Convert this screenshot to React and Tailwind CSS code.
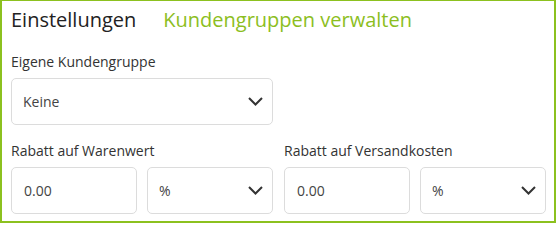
import React from 'react';

const font = { fontFamily: '"Open Sans", "Noto Sans", sans-serif' };

function Chevron() {
  return (
    <svg width="15" height="9" viewBox="0 0 15 9" fill="none" className="shrink-0">
      <path d="M1 1l6.5 6.5L14 1" stroke="#333" strokeWidth="2" />
    </svg>
  );
}

function SelectBox({ value, className = '' }) {
  return (
    <div
      className={`flex h-[47px] items-center justify-between rounded-[5px] border border-[#dcdcdc] bg-white pl-[11px] pr-[9px] text-[14px] text-[#444] ${className}`}
    >
      <span>{value}</span>
      <Chevron />
    </div>
  );
}

function TextBox({ value }) {
  return (
    <div className="flex h-[47px] w-[126px] items-center rounded-[5px] border border-[#dcdcdc] bg-white pl-[12px] text-[14px] text-[#444]">
      {value}
    </div>
  );
}

function DiscountField({ label }) {
  return (
    <div className="w-[262px]">
      <label className="mb-[6px] block text-[14px] leading-[20px] text-[#333]">{label}</label>
      <div className="flex gap-[10px]">
        <TextBox value="0.00" />
        <SelectBox value="%" className="w-[126px]" />
      </div>
    </div>
  );
}

export default function App() {
  return (
    <div
      style={font}
      className="h-[223px] w-[556px] border-2 border-t border-[#8cc11f] bg-white px-[9px] pt-[6px] pb-[7px]"
    >
      <div className="flex items-baseline gap-[27px] text-[20px] leading-[26px]">
        <h2 className="text-[#222]">Einstellungen</h2>
        <a className="text-[#8cbe1e]">Kundengruppen verwalten</a>
      </div>

      <div className="mt-[19px]">
        <label className="mb-[6px] block text-[14px] leading-[20px] text-[#333]">Eigene Kundengruppe</label>
        <SelectBox value="Keine" className="w-[262px]" />
      </div>

      <div className="mt-[16px] flex gap-[11px]">
        <DiscountField label="Rabatt auf Warenwert" />
        <DiscountField label="Rabatt auf Versandkosten" />
      </div>
    </div>
  );
}
